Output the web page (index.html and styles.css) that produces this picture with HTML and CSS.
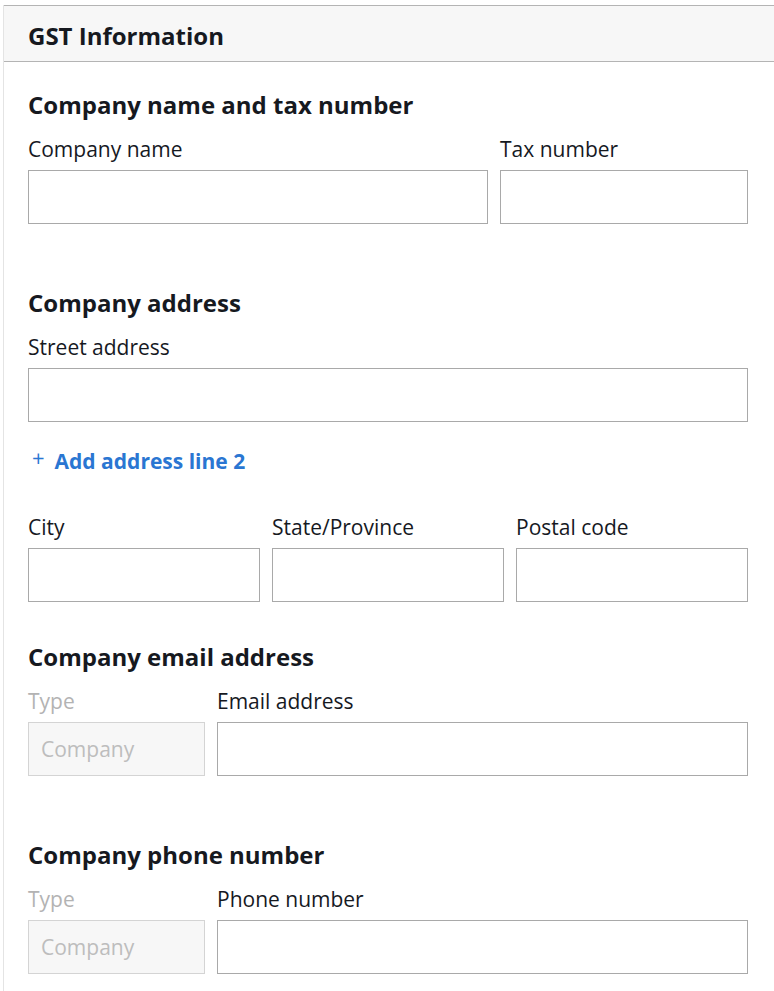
FILE: index.html
```html
<!DOCTYPE html>
<html lang="en">
<head>
<meta charset="utf-8">
<title>GST Information</title>
<link rel="stylesheet" href="styles.css">
</head>
<body>
<div class="panel">
  <div class="panel-header"><h1 class="panel-title">GST Information</h1></div>
  <div class="panel-body">
    <section class="section section-first">
      <h2 class="section-title">Company name and tax number</h2>
      <div class="row row-name">
        <div class="field"><label class="label">Company name</label><div class="input"></div></div>
        <div class="field"><label class="label">Tax number</label><div class="input"></div></div>
      </div>
    </section>
    <section class="section section-address">
      <h2 class="section-title">Company address</h2>
      <div class="field"><label class="label">Street address</label><div class="input"></div></div>
      <a class="add-link" href="#"><span class="plus">+</span>Add address line 2</a>
      <div class="row row-three">
        <div class="field"><label class="label">City</label><div class="input"></div></div>
        <div class="field"><label class="label">State/Province</label><div class="input"></div></div>
        <div class="field"><label class="label">Postal code</label><div class="input"></div></div>
      </div>
    </section>
    <section class="section section-email">
      <h2 class="section-title">Company email address</h2>
      <div class="row row-type">
        <div class="field"><label class="label label-disabled">Type</label><div class="input input-disabled">Company</div></div>
        <div class="field"><label class="label">Email address</label><div class="input"></div></div>
      </div>
    </section>
    <section class="section section-phone">
      <h2 class="section-title">Company phone number</h2>
      <div class="row row-type">
        <div class="field"><label class="label label-disabled">Type</label><div class="input input-disabled">Company</div></div>
        <div class="field"><label class="label">Phone number</label><div class="input"></div></div>
      </div>
    </section>
  </div>
</div>
</body>
</html>
```
FILE: styles.css
```css
html, body {
  margin: 0;
  padding: 0;
  background: #ffffff;
  overflow: hidden;
}
body {
  font-family: "Open Sans", "Noto Sans", sans-serif;
  color: #16191f;
}
.panel {
  margin: 5px 0 0 3px;
  width: 771px;
  box-sizing: border-box;
  border-left: 1px solid #e4e4e4;
  min-height: 986px;
}
.panel-header {
  background: #f7f7f7;
  border-top: 1px solid #b4b4b4;
  border-bottom: 1px solid #b4b4b4;
  height: 55px;
  box-sizing: content-box;
  display: flex;
  align-items: center;
  padding-left: 24px;
}
.panel-title {
  margin: 4px 0 0;
  font-size: 24px;
  font-weight: 700;
  line-height: 28px;
}
.panel-body {
  padding: 0 26px 0 24px;
}
.section-title {
  margin: 0 0 19px;
  font-size: 24px;
  font-weight: 700;
  line-height: 28px;
}
.section-first { padding-top: 29px; }
.section-address { padding-top: 65px; }
.section-email { padding-top: 41px; }
.section-phone { padding-top: 65px; }
.row { display: grid; column-gap: 12px; }
.row-name { grid-template-columns: 460fr 248fr; }
.row-three { grid-template-columns: 1fr 1fr 1fr; }
.row-type { grid-template-columns: 177px 1fr; }
.label {
  display: block;
  font-size: 21px;
  line-height: 22px;
  margin-bottom: 10px;
  color: #16191f;
}
.label-disabled { color: #b3b3b3; }
.input {
  height: 54px;
  box-sizing: border-box;
  border: 1px solid #a9a9a9;
  background: #fff;
}
.input-disabled {
  background: #f7f7f7;
  border-color: #d4d4d4;
  color: #bdbdbd;
  font-size: 21px;
  line-height: 52px;
  padding-left: 12px;
}
.add-link {
  display: flex;
  align-items: center;
  margin: 27px 0 43px;
  color: #2a76d2;
  font-size: 21px;
  font-weight: 700;
  line-height: 24px;
  text-decoration: none;
  width: max-content;
}
.plus {
  font-weight: 400;
  font-size: 22px;
  margin: -8px 10px 0 4px;
}
```
